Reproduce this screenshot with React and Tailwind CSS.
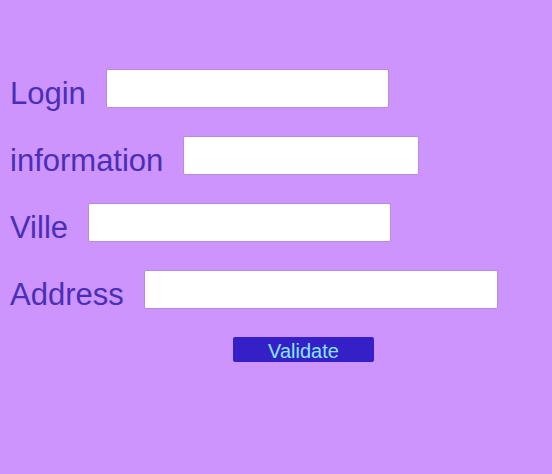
import React from 'react';

const fields = [
    { label: 'Login', width: 'w-[283px]' },
    { label: 'information', width: 'w-[236px]' },
    { label: 'Ville', width: 'w-[303px]' },
    { label: 'Address', width: 'w-[354px]' },
];

export default function App() {
    return (
        <main className="min-h-[474px] w-full bg-[#cc94fc] pt-[69px] pl-[10px] font-['Liberation_Sans',Arial,sans-serif]">
            <form action="#" className="flex flex-col gap-[28px]">
                {fields.map((f) => (
                    <div key={f.label} className="flex h-[39px] flex-row items-center">
                        <label className="mr-[20px] mt-[6px] translate-y-[2px] text-[31px] leading-none text-[#4a2fb6]">{f.label}</label>
                        <input
                            type="text"
                            className={`${f.width} h-[39px] rounded-[2px] border border-[#b98ade] bg-white px-2 text-[13px] outline-none`}
                        />
                    </div>
                ))}
            </form>
            <div className="mt-[28px] pl-[223px]">
                <button type="button" className="h-[25px] w-[141px] rounded-[2px] bg-[#3520c8] pt-[2px] text-[20px] leading-none text-[#86e6ff]">
                    Validate
                </button>
            </div>
        </main>
    );
}
